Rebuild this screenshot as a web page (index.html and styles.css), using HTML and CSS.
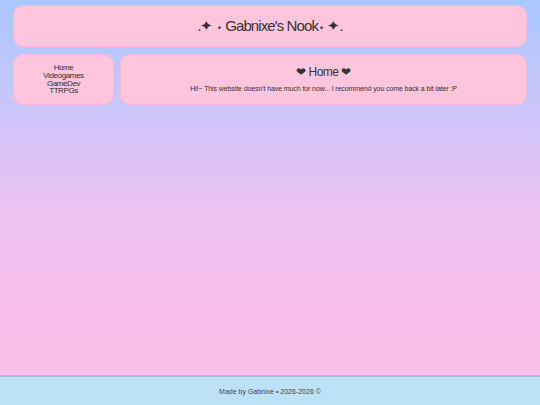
FILE: index.html
```html
<!DOCTYPE html>
<html>
<head>
<meta charset="utf-8">
<link rel="stylesheet" href="styles.css">
</head>
<body>
<div class="page">
  <div class="content">
    <header class="box header">
      <h1 class="title">.✦ <span class="mini">⋆</span> Gabnixe's Nook<span class="mini">⋆</span> ✦.</h1>
    </header>
    <div class="row">
      <nav class="box sidebar">
        <a class="nav-link" href="#">Home</a>
        <a class="nav-link" href="#">Videogames</a>
        <a class="nav-link" href="#">GameDev</a>
        <a class="nav-link" href="#">TTRPGs</a>
      </nav>
      <main class="box main">
        <h2 class="main-title">❤ Home ❤</h2>
        <p class="main-text">Hi!~ This website doesn't have much for now... I recommend you come back a bit later :P</p>
      </main>
    </div>
  </div>
  <footer class="footer">Made by Gabnixe • 2026-2026 ©</footer>
</div>
</body>
</html>
```
FILE: styles.css
```css
html, body {
  margin: 0;
  padding: 0;
  height: 100%;
}
body {
  font-family: "Liberation Sans", Arial, sans-serif;
  color: #333;
  background: linear-gradient(to bottom, #a9c8ff 0%, #f0c2f2 55%, #ffbde6 100%);
}
.page {
  min-height: 100vh;
  display: flex;
  flex-direction: column;
}
.content {
  flex: 1;
  padding: 5px 13px;
  display: flex;
  flex-direction: column;
  gap: 7px;
}
.box {
  background: #ffc5dc;
  border: 1px solid #f8b8d8;
  border-radius: 10px;
  box-sizing: border-box;
}
.header {
  height: 42px;
  display: flex;
  align-items: center;
  justify-content: center;
}
.title {
  margin: 0;
  font-size: 15px;
  font-weight: normal;
  letter-spacing: -0.9px;
  color: #333;
}
.mini {
  font-size: 11px;
}
.row {
  display: flex;
  gap: 6px;
}
.sidebar {
  width: 101px;
  height: 51px;
  display: flex;
  flex-direction: column;
  align-items: center;
  justify-content: center;
}
.nav-link {
  color: #2e2e2e;
  text-decoration: none;
  font-size: 8px;
  line-height: 7.6px;
  letter-spacing: -0.4px;
}
.main {
  flex: 1;
  height: 51px;
  display: flex;
  flex-direction: column;
  align-items: center;
  padding-top: 10px;
}
.main-title {
  margin: 0;
  font-size: 12px;
  font-weight: normal;
  letter-spacing: -0.5px;
}
.main-text {
  margin: 6px 0 0;
  font-size: 7px;
  letter-spacing: -0.1px;
}
.footer {
  height: 30px;
  box-sizing: border-box;
  background: #bde1f6;
  border-top: 2px solid #aabfe3;
  display: flex;
  align-items: center;
  justify-content: center;
  font-size: 7px;
  color: #444;
}
```
